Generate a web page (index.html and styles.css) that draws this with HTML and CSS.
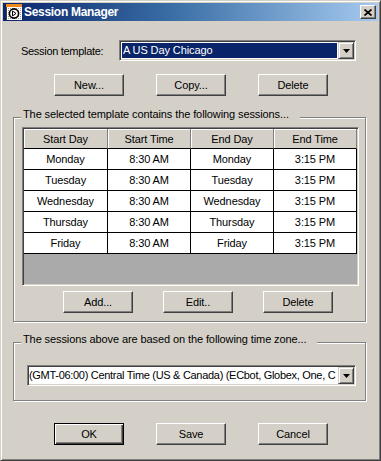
FILE: index.html
```html
<!DOCTYPE html>
<html>
<head>
<meta charset="utf-8">
<link rel="stylesheet" href="styles.css">
</head>
<body>
<div class="window">
  <div class="titlebar">
    <svg class="app-icon" viewBox="0 0 16 16" width="16" height="16">
      <defs>
        <pattern id="chk" width="2" height="2" patternUnits="userSpaceOnUse">
          <rect width="2" height="2" fill="#ffffff"/>
          <rect width="1" height="1" fill="#9a9a9a"/>
        </pattern>
      </defs>
      <rect x="0" y="0" width="16" height="3" fill="#f08a1c"/>
      <rect x="0" y="3" width="16" height="13" fill="url(#chk)"/>
      <rect x="0" y="3" width="1" height="13" fill="#404040"/>
      <circle cx="8" cy="9.5" r="4.6" fill="#ffffff" stroke="#000000" stroke-width="1.6"/>
      <path d="M6.5 7 L10 9.5 L6.5 12 Z" fill="none" stroke="#000000" stroke-width="1"/>
    </svg>
    <span class="title">Session Manager</span>
    <span class="close-btn">
      <svg viewBox="0 0 8 7" width="8" height="7">
        <path d="M0.5 0.5 L7.5 6.5 M7.5 0.5 L0.5 6.5" stroke="#000" stroke-width="1.7" fill="none"/>
      </svg>
    </span>
  </div>

  <div class="content">
    <div class="template-row">
      <span class="field-label">Session template:</span>
      <div class="combo combo-template">
        <span class="combo-text selected">A US Day Chicago</span>
        <span class="combo-btn"><svg viewBox="0 0 7 4" width="7" height="4"><path d="M0 0H7L3.5 4Z" fill="#000"/></svg></span>
      </div>
    </div>

    <div class="btn-row btn-row-top">
      <button class="btn">New...</button>
      <button class="btn">Copy...</button>
      <button class="btn">Delete</button>
    </div>

    <div class="group group-sessions">
      <span class="group-label">The selected template contains the following sessions...</span>
      <div class="grid-frame">
        <div class="grid">
          <div class="hcell">Start Day</div>
          <div class="hcell">Start Time</div>
          <div class="hcell">End Day</div>
          <div class="hcell">End Time</div>

          <div class="cell">Monday</div>
          <div class="cell">8:30 AM</div>
          <div class="cell">Monday</div>
          <div class="cell">3:15 PM</div>

          <div class="cell">Tuesday</div>
          <div class="cell">8:30 AM</div>
          <div class="cell">Tuesday</div>
          <div class="cell">3:15 PM</div>

          <div class="cell">Wednesday</div>
          <div class="cell">8:30 AM</div>
          <div class="cell">Wednesday</div>
          <div class="cell">3:15 PM</div>

          <div class="cell">Thursday</div>
          <div class="cell">8:30 AM</div>
          <div class="cell">Thursday</div>
          <div class="cell">3:15 PM</div>

          <div class="cell">Friday</div>
          <div class="cell">8:30 AM</div>
          <div class="cell">Friday</div>
          <div class="cell">3:15 PM</div>
        </div>
      </div>
      <div class="btn-row btn-row-group">
        <button class="btn">Add...</button>
        <button class="btn">Edit..</button>
        <button class="btn">Delete</button>
      </div>
    </div>

    <div class="group group-tz">
      <span class="group-label">The sessions above are based on the following time zone...</span>
      <div class="combo combo-tz">
        <span class="combo-text">(GMT-06:00) Central Time (US &amp; Canada) (ECbot, Globex, One, C</span>
        <span class="combo-btn"><svg viewBox="0 0 7 4" width="7" height="4"><path d="M0 0H7L3.5 4Z" fill="#000"/></svg></span>
      </div>
    </div>

    <div class="btn-row btn-row-bottom">
      <button class="btn btn-default">OK</button>
      <button class="btn">Save</button>
      <button class="btn">Cancel</button>
    </div>
  </div>
</div>
</body>
</html>
```

FILE: styles.css
```css
* {
  box-sizing: border-box;
}

body {
  margin: 0;
  background: #d4d0c8;
  font-family: "Liberation Sans", Arial, sans-serif;
  font-size: 11px;
  letter-spacing: -0.1px;
  color: #000;
}

.window {
  width: 381px;
  height: 461px;
  border: 1px solid;
  border-color: #d4d0c8 #404040 #404040 #d4d0c8;
  box-shadow: inset 1px 1px #ffffff, inset -1px -1px #808080;
  padding: 2px;
  overflow: hidden;
}

/* Title bar */
.titlebar {
  height: 18px;
  display: flex;
  align-items: center;
  padding: 0 2px 0 3px;
  background: linear-gradient(to right, #0a246a 0%, #3a6ea5 45%, #a6caf0 100%);
}

.app-icon {
  display: block;
  flex: none;
  margin-right: 1px;
}

.title {
  flex: 1;
  color: #fff;
  font-weight: bold;
  font-size: 12px;
  letter-spacing: -0.3px;
  line-height: 18px;
  padding-left: 1px;
}

.close-btn {
  width: 16px;
  height: 14px;
  display: flex;
  align-items: center;
  justify-content: center;
  background: #d4d0c8;
  border: 1px solid;
  border-color: #ffffff #404040 #404040 #ffffff;
  box-shadow: inset -1px -1px #808080;
}

.close-btn svg {
  display: block;
}

/* Template row */
.template-row {
  display: flex;
  align-items: center;
  margin-top: 19px;
  padding-left: 18px;
  height: 21px;
}

.field-label {
  width: 98px;
  flex: none;
  letter-spacing: -0.3px;
}

/* Combo box */
.combo {
  display: flex;
  height: 21px;
  background: #fff;
  border: 1px solid;
  border-color: #808080 #ffffff #ffffff #808080;
  box-shadow: inset 1px 1px #404040, inset -1px -1px #d4d0c8;
  padding: 1px;
}

.combo-template {
  width: 237px;
}

.combo-text {
  flex: 1;
  min-width: 0;
  overflow: hidden;
  white-space: nowrap;
  line-height: 15px;
  margin: 1px;
  padding-left: 1px;
}

.combo-text.selected {
  background: #0a246a;
  color: #fff;
}

.combo-btn {
  flex: none;
  width: 16px;
  display: flex;
  align-items: center;
  justify-content: center;
  background: #d4d0c8;
  border: 1px solid;
  border-color: #d4d0c8 #404040 #404040 #d4d0c8;
  box-shadow: inset 1px 1px #ffffff, inset -1px -1px #808080;
}

.combo-btn svg {
  display: block;
}

/* Buttons */
.btn-row {
  display: flex;
  gap: 32px;
}

.btn-row-top {
  margin-top: 13px;
  padding-left: 51px;
}

.btn {
  width: 70px;
  height: 22px;
  padding: 0;
  margin: 0;
  font: inherit;
  letter-spacing: inherit;
  color: #000;
  background: #d4d0c8;
  border: 1px solid;
  border-color: #ffffff #404040 #404040 #ffffff;
  box-shadow: inset -1px -1px #808080;
  border-radius: 0;
  appearance: none;
}

.btn-default {
  border-color: #000;
  box-shadow: inset 1px 1px #ffffff, inset -1px -1px #404040, inset -2px -2px #808080;
}

/* Group boxes */
.group {
  position: relative;
  margin-left: 10px;
  width: 353px;
  border: 1px solid #808080;
  box-shadow: inset 1px 1px #ffffff, 1px 1px #ffffff;
}

.group-label {
  position: absolute;
  top: -10px;
  left: 7px;
  padding: 0 11px 0 2px;
  line-height: 13px;
  background: #d4d0c8;
  white-space: nowrap;
}

.group-sessions {
  margin-top: 21px;
  height: 205px;
  padding: 9px 0 0 8px;
}

.grid-frame {
  width: 337px;
  height: 159px;
  border: 1px solid;
  border-color: #808080 #ffffff #ffffff #808080;
  box-shadow: inset 1px 1px #404040, inset -1px -1px #d4d0c8;
  padding: 1px;
  background: #abaaab;
}

.grid {
  display: grid;
  grid-template-columns: 84px 83px 83px 83px;
}

.hcell {
  height: 20px;
  display: flex;
  align-items: center;
  justify-content: center;
  background: #d4d0c8;
  border-right: 1px solid #808080;
  border-bottom: 1px solid #000;
  box-shadow: inset 1px 1px #ffffff;
}

.cell {
  height: 21px;
  display: flex;
  align-items: center;
  justify-content: center;
  background: #fff;
  border-right: 1px solid #000;
  border-bottom: 1px solid #000;
}

.btn-row-group {
  margin-top: 5px;
  padding-left: 41px;
  gap: 30px;
}

.group-tz {
  margin-top: 20px;
  height: 59px;
  padding: 22px 0 0 13px;
}

.combo-tz {
  width: 329px;
}

.combo-tz .combo-text {
  margin: 1px 0;
  padding-left: 0;
  letter-spacing: -0.3px;
}

.btn-row-bottom {
  margin-top: 22px;
  padding-left: 51px;
}
```
